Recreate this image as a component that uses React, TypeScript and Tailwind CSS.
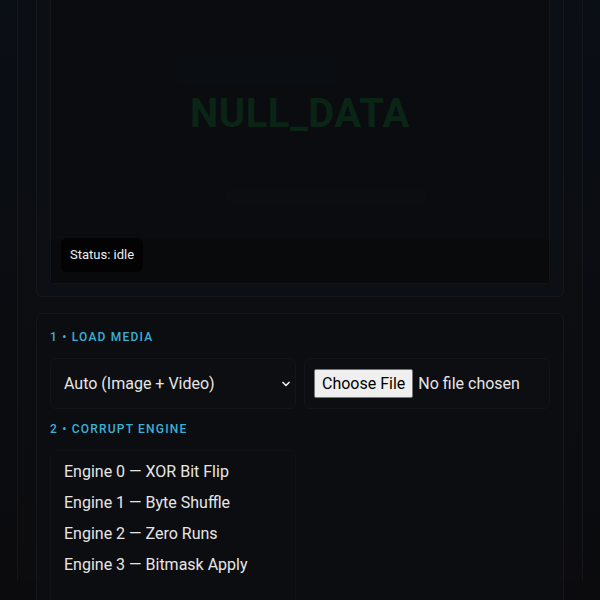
const engines = [
  'Engine 0 — XOR Bit Flip',
  'Engine 1 — Byte Shuffle',
  'Engine 2 — Zero Runs',
  'Engine 3 — Bitmask Apply',
];

const App = () => {
  return (
    <div
      className="h-[600px] overflow-hidden bg-gradient-to-b from-[#0a0e15] to-[#0b0b0d] text-[#e6e6e6]"
      style={{ fontFamily: 'Roboto, "Noto Sans", sans-serif' }}
    >
      <div className="mx-[17px] h-full border-x border-[#13171c] bg-gradient-to-b from-[#0b0f15] to-[#0c0c0e] px-[18px]">
        {/* preview panel */}
        <section className="-mt-[20px] rounded-md border border-[#14181d] bg-[#0c0f14] px-[13px] pb-[12px] pt-[12px]">
          <div className="relative flex h-[291px] items-center justify-center rounded-sm border border-[#12151a] bg-[#0a0c10]">
            <div className="absolute left-[126px] top-[62px] h-[30px] w-[160px] bg-[#0a0d11]" />
            <div className="absolute left-[175px] top-[196px] h-[16px] w-[200px] bg-[#0b0d11]" />
            <span className="relative -mt-[50px] text-[40px] font-bold tracking-[0.5px] text-[#0a2415]">
              NULL_DATA
            </span>
            <div className="absolute inset-x-0 bottom-0 h-[44px] bg-[#090a0c]" />
            <div className="absolute bottom-[11px] left-[10px] rounded-md bg-[#030303] px-[9px] py-[10px] text-[13px] leading-[14px] text-[#ededed]">
              Status: idle
            </div>
          </div>
        </section>

        {/* controls panel */}
        <section className="mt-[16px] h-[400px] rounded-md border border-[#14171b] bg-[#0c0d10] px-[13px] pt-[14px]">
          <h2 className="text-[12px] font-medium tracking-[1.2px] text-[#3cb0d4]">
            1 • LOAD MEDIA
          </h2>
          <div className="mt-[12px] grid grid-cols-2 gap-[8px]">
            <div className="flex h-[51px] items-center justify-between rounded-md border border-[#121418] bg-[#0d0e11] pl-[13px] pr-[3px]">
              <span className="text-[16px]">Auto (Image + Video)</span>
              <svg
                className="h-[12px] w-[12px]"
                fill="none"
                viewBox="0 0 24 24"
                strokeWidth="3.5"
                stroke="currentColor"
                aria-hidden="true"
              >
                <path strokeLinecap="round" strokeLinejoin="round" d="M6 9l6 6 6-6" />
              </svg>
            </div>
            <div className="flex h-[51px] items-center rounded-md border border-[#121418] bg-[#0d0e11] pl-[9px]">
              <span className="rounded-[2px] border border-[#767676] bg-[#efefef] px-[7px] py-[4px] text-[16px] leading-[19px] text-black">
                Choose File
              </span>
              <span className="ml-[5px] text-[16px]">No file chosen</span>
            </div>
          </div>

          <h2 className="mt-[11px] text-[12px] font-medium tracking-[1.2px] text-[#3cb0d4]">
            2 • CORRUPT ENGINE
          </h2>
          <div className="mt-[12px] grid grid-cols-2 gap-[8px]">
            <div className="h-[200px] rounded-md border border-[#0f1114] bg-[#0c0d10] pl-[13px] pt-[5px]">
              {engines.map((engine) => (
                <div key={engine} className="h-[31px] text-[16px] leading-[31px]">
                  {engine}
                </div>
              ))}
            </div>
          </div>
        </section>
      </div>
    </div>
  );
};

export default App;
